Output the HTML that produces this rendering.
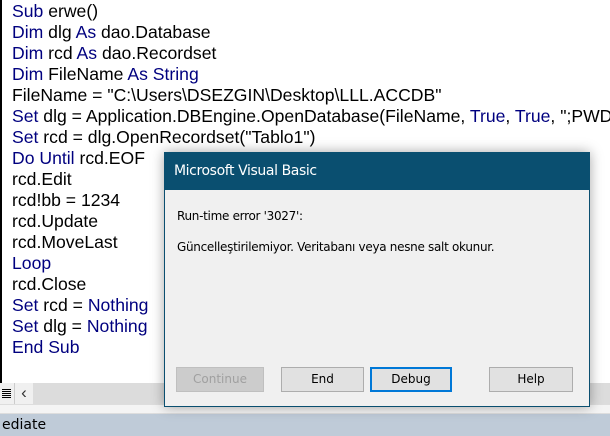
<!DOCTYPE html>
<html><head><style>
body{margin:0;width:610px;height:436px;overflow:hidden;background:#fff;position:relative;font-family:"Liberation Sans",Arial,sans-serif}
.code{position:absolute;left:0;top:0;width:610px;height:383px;border-left:2px solid #000;box-sizing:border-box}
.l{position:absolute;left:10px;font-size:17.6px;line-height:21px;color:#000;white-space:pre}
.k{color:#00007f}
.sb{position:absolute;left:0;top:383px;width:610px;height:21px;background:#dcdcdc}
.dlg{position:absolute;left:164px;top:152px;width:426px;height:255px;background:#f0f0f0;border:1px solid #0a4f70;box-sizing:border-box;box-shadow:0 0 12px rgba(0,0,0,.35)}
.tb{height:37px;background:#0a4f70;color:#fff;font-size:14px;line-height:37px;padding-left:9px;font-family:"DejaVu Sans",sans-serif;letter-spacing:-0.4px}
.msg{position:absolute;left:12px;font-size:12px;color:#000;font-family:"DejaVu Sans",sans-serif;letter-spacing:-0.3px}
.btn{position:absolute;top:214px;height:25px;background:#e1e1e1;border:1px solid #adadad;box-sizing:border-box;font-size:12px;line-height:23px;text-align:center;font-family:"DejaVu Sans",sans-serif}
</style></head><body>
<div class="code">
<div class="l" style="top:1px"><span class="k">Sub</span> erwe()</div>
<div class="l" style="top:22px"><span class="k">Dim</span> dlg <span class="k">As</span> dao.Database</div>
<div class="l" style="top:43px"><span class="k">Dim</span> rcd <span class="k">As</span> dao.Recordset</div>
<div class="l" style="top:64px"><span class="k">Dim</span> FileName <span class="k">As String</span></div>
<div class="l" style="top:85px">FileName = "C:\Users\DSEZGIN\Desktop\LLL.ACCDB"</div>
<div class="l" style="top:106px"><span class="k">Set</span> dlg = Application.DBEngine.OpenDatabase(FileName, <span class="k">True</span>, <span class="k">True</span>, ";PWD=</div>
<div class="l" style="top:127px"><span class="k">Set</span> rcd = dlg.OpenRecordset("Tablo1")</div>
<div class="l" style="top:148px"><span class="k">Do Until</span> rcd.EOF</div>
<div class="l" style="top:169px">rcd.Edit</div>
<div class="l" style="top:190px">rcd!bb = 1234</div>
<div class="l" style="top:211px">rcd.Update</div>
<div class="l" style="top:232px">rcd.MoveLast</div>
<div class="l" style="top:253px"><span class="k">Loop</span></div>
<div class="l" style="top:274px">rcd.Close</div>
<div class="l" style="top:295px"><span class="k">Set</span> rcd = <span class="k">Nothing</span></div>
<div class="l" style="top:316px"><span class="k">Set</span> dlg = <span class="k">Nothing</span></div>
<div class="l" style="top:337px"><span class="k">End Sub</span></div>
</div>
<div class="sb">
<div style="position:absolute;left:0;top:0;width:14px;height:21px;background:#f0f0f0;border-right:1px solid #ccc">
<div style="position:absolute;left:2px;top:6px;width:9px;border-top:1px solid #000;height:1px"></div>
<div style="position:absolute;left:2px;top:8px;width:9px;border-top:1px solid #000;height:1px"></div>
<div style="position:absolute;left:2px;top:10px;width:9px;border-top:1px solid #000;height:1px"></div>
<div style="position:absolute;left:2px;top:12px;width:9px;border-top:1px solid #000;height:1px"></div>
<div style="position:absolute;left:2px;top:14px;width:9px;border-top:1px solid #000;height:1px"></div>
</div>
<div style="position:absolute;left:15px;top:0;width:18px;height:21px;background:#f0f0f0;font-size:17px;line-height:20px;text-align:center;color:#333">&#8249;</div>
</div>
<div style="position:absolute;left:0;top:404px;width:610px;height:10px;background:#f4f4f4;border-top:1px solid #ddd;border-bottom:1px solid #ddd;box-sizing:border-box"></div>
<div style="position:absolute;left:0;top:414px;width:610px;height:22px;background:#bfcbd8;font-size:14px;line-height:22px;padding-left:2px;font-family:'DejaVu Sans',sans-serif">ediate</div>
<div class="dlg">
<div class="tb">Microsoft Visual Basic</div>
<div class="msg" style="top:56px">Run-time error '3027':</div>
<div class="msg" style="top:87px">Güncelleştirilemiyor. Veritabanı veya nesne salt okunur.</div>
<div class="btn" style="left:11px;width:88px;color:#a0a0a0;background:#cccccc;border-color:#bfbfbf">Continue</div>
<div class="btn" style="left:116px;width:83px">End</div>
<div class="btn" style="left:205px;width:82px;border:2px solid #0078d7;line-height:21px">Debug</div>
<div class="btn" style="left:324px;width:84px">Help</div>
</div>
</body></html>
